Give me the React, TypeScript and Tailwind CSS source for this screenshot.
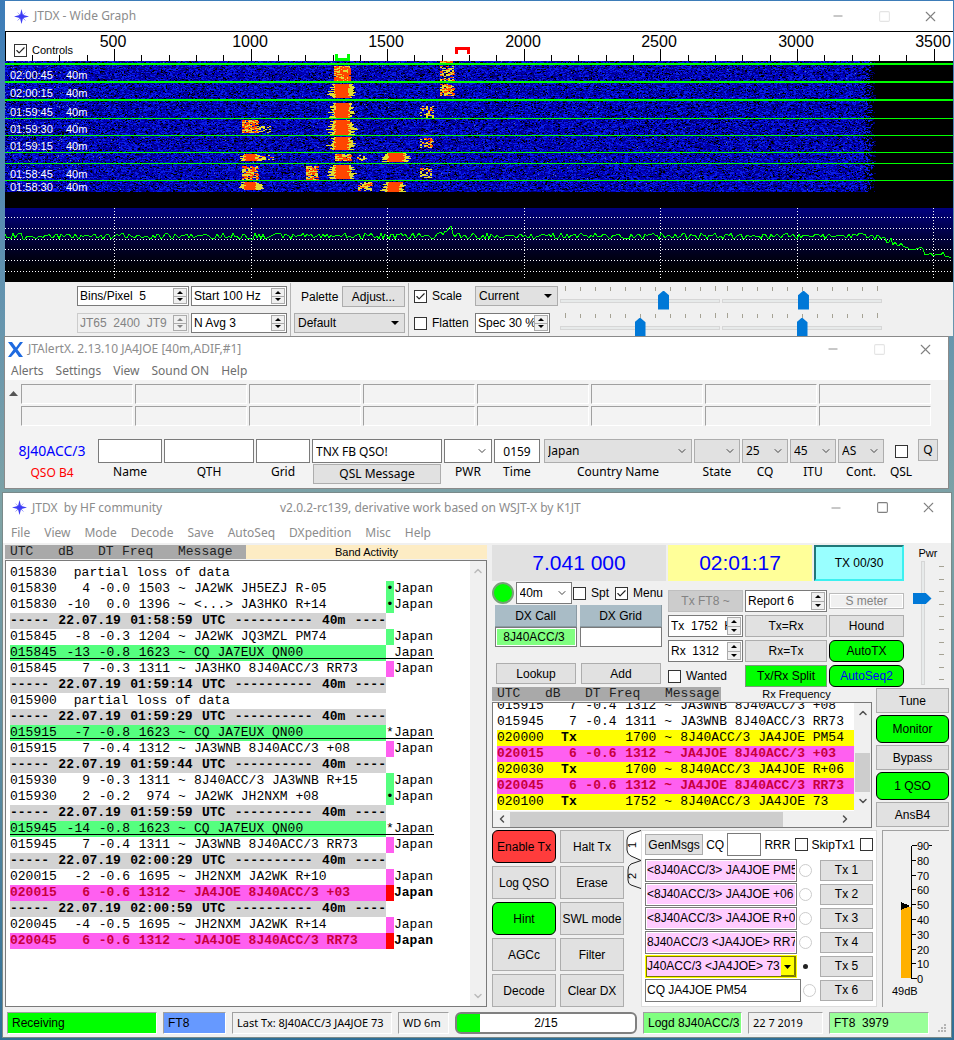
import { useMemo, type ReactNode } from "react"
import { Check, ChevronDown, ChevronLeft, ChevronRight, ChevronUp, Minus, Square, X } from "lucide-react"
import clsx from "clsx"

/* ---------- data ---------- */

type Decode = {
  utc?: string
  db?: string
  dt?: string
  freq?: string
  msg?: string
  note?: string
  divider?: string
  tone?: "cq" | "mine" | "tx"
  mark?: "green" | "pink" | "red" | "none"
  sign?: string
}

const bandActivity: Decode[] = [
  { utc: "015830", note: "partial loss of data" },
  { utc: "015830", db: "4", dt: "-0.0", freq: "1503", msg: "JA2WK JH5EZJ R-05", mark: "green", sign: "•" },
  { utc: "015830", db: "-10", dt: "0.0", freq: "1396", msg: "<...> JA3HKO R+14", mark: "green", sign: "•" },
  { divider: "01:58:59" },
  { utc: "015845", db: "-8", dt: "-0.3", freq: "1204", msg: "JA2WK JQ3MZL PM74", mark: "green" },
  { utc: "015845", db: "-13", dt: "-0.8", freq: "1623", msg: "CQ JA7EUX QN00", tone: "cq", mark: "none" },
  { utc: "015845", db: "7", dt: "-0.3", freq: "1311", msg: "JA3HKO 8J40ACC/3 RR73", mark: "pink" },
  { divider: "01:59:14" },
  { utc: "015900", note: "partial loss of data" },
  { divider: "01:59:29" },
  { utc: "015915", db: "-7", dt: "-0.8", freq: "1623", msg: "CQ JA7EUX QN00", tone: "cq", mark: "none", sign: "*" },
  { utc: "015915", db: "7", dt: "-0.4", freq: "1312", msg: "JA3WNB 8J40ACC/3 +08", mark: "pink" },
  { divider: "01:59:44" },
  { utc: "015930", db: "9", dt: "-0.3", freq: "1311", msg: "8J40ACC/3 JA3WNB R+15", mark: "green" },
  { utc: "015930", db: "2", dt: "-0.2", freq: "974", msg: "JA2WK JH2NXM +08", mark: "green", sign: "•" },
  { divider: "01:59:59" },
  { utc: "015945", db: "-14", dt: "-0.8", freq: "1623", msg: "CQ JA7EUX QN00", tone: "cq", mark: "none", sign: "*" },
  { utc: "015945", db: "7", dt: "-0.4", freq: "1311", msg: "JA3WNB 8J40ACC/3 RR73", mark: "pink" },
  { divider: "02:00:29" },
  { utc: "020015", db: "-2", dt: "-0.6", freq: "1695", msg: "JH2NXM JA2WK R+10", mark: "pink" },
  { utc: "020015", db: "6", dt: "-0.6", freq: "1312", msg: "JA4JOE 8J40ACC/3 +03", tone: "mine", mark: "red" },
  { divider: "02:00:59" },
  { utc: "020045", db: "-4", dt: "-0.5", freq: "1695", msg: "JH2NXM JA2WK R+14", mark: "pink" },
  { utc: "020045", db: "6", dt: "-0.6", freq: "1312", msg: "JA4JOE 8J40ACC/3 RR73", tone: "mine", mark: "red" },
]

const rxFrequency: Decode[] = [
  { utc: "015915", db: "7", dt: "-0.4", freq: "1312", msg: "JA3WNB 8J40ACC/3 +08" },
  { utc: "015945", db: "7", dt: "-0.4", freq: "1311", msg: "JA3WNB 8J40ACC/3 RR73" },
  { utc: "020000", db: "Tx", dt: "", freq: "1700", msg: "8J40ACC/3 JA4JOE PM54", tone: "tx" },
  { utc: "020015", db: "6", dt: "-0.6", freq: "1312", msg: "JA4JOE 8J40ACC/3 +03", tone: "mine" },
  { utc: "020030", db: "Tx", dt: "", freq: "1700", msg: "8J40ACC/3 JA4JOE R+06", tone: "tx" },
  { utc: "020045", db: "6", dt: "-0.6", freq: "1312", msg: "JA4JOE 8J40ACC/3 RR73", tone: "mine" },
  { utc: "020100", db: "Tx", dt: "", freq: "1752", msg: "8J40ACC/3 JA4JOE 73", tone: "tx" },
]

// x, y, width, height, heat (0 = faint yellow, 1 = solid orange)
const signals = [
  [435, 0, 12, 2, 0.5],
  [329, 5, 16, 15, 0.6], [435, 5, 14, 15, 0.15],
  [329, 23, 16, 14, 0.9], [435, 23, 14, 12, 0.25],
  [329, 42, 16, 15, 0.9], [415, 45, 13, 12, 0.03],
  [329, 59, 16, 15, 1], [237, 59, 15, 13, 0.45], [252, 65, 14, 7, 0.01],
  [329, 76, 16, 13, 1], [415, 77, 14, 10, 0.08],
  [239, 93, 13, 7, 0.9], [330, 93, 15, 7, 0.4], [253, 94, 15, 6, 0.02], [352, 94, 10, 6, 0.04], [382, 92, 18, 9, 1],
  [237, 105, 15, 14, 0.35], [301, 105, 12, 14, 0.35], [329, 104, 16, 14, 0.9], [415, 107, 12, 10, 0.04],
  [239, 121, 13, 8, 0.9], [353, 121, 13, 9, 0.15], [382, 121, 15, 10, 1],
]

const stamps = [
  ["02:00:45", 18], ["02:00:15", 36], ["01:59:45", 55], ["01:59:30", 72],
  ["01:59:15", 89], ["01:58:45", 117], ["01:58:30", 130],
] as const

const greenLines = [[2, 2], [20, 2], [38, 2], [57, 1], [74, 1], [91, 1], [102, 1], [119, 1]]

// small deterministic generator so the waterfall is stable between renders
function seeded(seed: number) {
  let s = seed
  return () => {
    s = (s * 1664525 + 1013904223) % 4294967296
    return s / 4294967296
  }
}

/* ---------- wide graph drawings ---------- */

function Waterfall() {
  const layers = useMemo(() => {
    const rnd = seeded(41)
    let dark = ""
    let navy = ""
    let bright = ""
    let specks = ""
    let yellow = ""
    let orange = ""
    for (let y = 0; y < 131; y++) {
      let x = 0
      while (x < 870) {
        const w = rnd() < 0.6 ? 1 : 2
        const r = rnd()
        const edge = x > 856 ? (x - 856) / 18 : 0
        if (r < 0.09 + edge) dark += `M${x} ${y}h${w}`
        else if (r < 0.33 + edge) navy += `M${x} ${y}h${w}`
        else if (r > 0.72) bright += `M${x} ${y}h${w}`
        if (rnd() < (x < 75 ? 0.03 : 0.002)) specks += `M${x} ${y}h1`
        x += w
      }
    }
    for (const [sx, sy, sw, sh, heat] of signals) {
      for (let y = sy; y < sy + sh; y++) {
        if (heat > 0.85) {
          // rows bulge toward the middle of each burst
          const mid = 1 - Math.abs((y - sy) / sh - 0.6)
          const left = Math.floor(rnd() * 9 * mid)
          const right = Math.floor(rnd() * 9 * mid)
          yellow += `M${sx - left} ${y}h${sw + left + right}`
          orange += `M${sx + Math.floor(rnd() * 3)} ${y}h${sw - 1 - Math.floor(rnd() * 3)}`
          continue
        }
        for (let x = sx; x < sx + sw; x += 2) {
          if (rnd() < 0.35 + heat) yellow += `M${x} ${y}h2`
          if (rnd() < heat) orange += `M${x} ${y}h3`
        }
      }
    }
    return { dark, navy, bright, specks, yellow, orange }
  }, [])

  return (
    <svg className="block h-[131px] w-full bg-black" shapeRendering="crispEdges">
      <rect width="870" height="131" fill="#0000b9" />
      <g transform="translate(0 .5)" fill="none">
        <path d={layers.navy} stroke="#000078" />
        <path d={layers.bright} stroke="#0a1ee6" />
        <path d={layers.dark} stroke="#000" />
        <path d={layers.specks} stroke="#5a78b4" />
        <path d={layers.yellow} stroke="#e1dc32" />
        <path d={layers.orange} stroke="#ff4600" />
      </g>
      {greenLines.map(([y, h]) => (
        <rect key={y} y={y} width="100%" height={h} fill="#00ff00" />
      ))}
      <g fill="#fff" fontSize="11">
        {stamps.map(([time, y]) => (
          <g key={time}>
            <text x="5" y={y}>{time}</text>
            <text x="61" y={y}>40m</text>
          </g>
        ))}
      </g>
    </svg>
  )
}

function FrequencyScale() {
  const ticks = Array.from({ length: 34 }, (_, i) => ({ x: 27 + Math.round(i * 27.32), hz: 200 + i * 100 }))
  return (
    <svg className="block h-[30px] w-full border-t border-l border-black bg-white" shapeRendering="crispEdges">
      {ticks.map(({ x, hz }) => (
        <rect key={hz} x={x - 1} y={hz % 500 === 0 ? 17 : 23} width="1" height="13" fill="#000" />
      ))}
      <g fontSize="16" textAnchor="middle">
        {ticks.filter((t) => t.hz % 500 === 0).map(({ x, hz }) => (
          <text key={hz} x={x - 2} y="15">{hz}</text>
        ))}
      </g>
      <path d="M330.5 22v5.5h12V22" fill="none" stroke="#00ff00" strokeWidth="3" />
      <path d="M450.5 22v-5.5h12V22" fill="none" stroke="#ff0000" strokeWidth="3" />
    </svg>
  )
}

function Spectrum() {
  const line = useMemo(() => {
    const rnd = seeded(7)
    const pts: string[] = []
    for (let x = 0; x < 948; x += 2) {
      let y = 28 + Math.round((rnd() - 0.5) * 6)
      if (x > 434 && x < 447) y -= Math.round((x - 434) * 0.9)
      if (x > 868) y += Math.round((Math.min(x, 935) - 868) * 0.3)
      if (x > 936) y -= 2
      pts.push(`${x},${y}`)
    }
    return pts.join(" ")
  }, [])

  return (
    <svg className="block h-[74px] w-full bg-linear-to-b from-[#00007f] to-black" shapeRendering="crispEdges">
      <g stroke="#fff" strokeDasharray="1 2">
        {[9, 20, 31, 41, 52, 63].map((y) => (
          <line key={y} x1="0" x2="100%" y1={y + 0.5} y2={y + 0.5} />
        ))}
        {[109, 246, 382, 519, 655, 792, 928].map((x) => (
          <line key={x} x1={x + 0.5} x2={x + 0.5} y1="0" y2="72" />
        ))}
      </g>
      <polyline points={line} fill="none" stroke="#00ff00" />
    </svg>
  )
}

/* ---------- widgets ---------- */

function Btn({ children, className }: { children: ReactNode; className?: string }) {
  return (
    <button className={clsx("border whitespace-pre", className ?? "border-[#adadad] bg-[#e1e1e1] text-black")}>
      {children}
    </button>
  )
}

function Tick({ label, checked, className, after }: { label: string; checked?: boolean; className?: string; after?: boolean }) {
  return (
    <label className={clsx("flex items-center gap-[5px]", after && "flex-row-reverse", className)}>
      <span className="relative block size-[13px]">
        <input
          type="checkbox"
          aria-label={label || "QSL"}
          defaultChecked={checked}
          className="block size-[13px] appearance-none border border-[#333] bg-white"
        />
        {checked && <Check className="pointer-events-none absolute top-px left-px size-[11px] text-[#222]" strokeWidth={2.5} />}
      </span>
      {label}
    </label>
  )
}

function Spin({ label, value, className, disabled }: { label: string; value: string; className?: string; disabled?: boolean }) {
  return (
    <div
      className={clsx(
        "flex border p-px",
        disabled ? "border-[#ccc] bg-[#f0f0f0] text-[#838383]" : "border-[#7a7a7a] bg-white",
        className,
      )}
    >
      <input aria-label={label} defaultValue={value} disabled={disabled} className="min-w-0 flex-1 bg-transparent pl-px whitespace-pre outline-none" />
      <span className="flex w-[14px] flex-col">
        <button aria-label={`${label} up`} disabled={disabled} className="flex flex-1 items-center justify-center border border-[#ababab] bg-[#f0f0f0]">
          <svg width="6" height="3"><path d="M0 3L3 0L6 3z" fill="currentColor" /></svg>
        </button>
        <button aria-label={`${label} down`} disabled={disabled} className="flex flex-1 items-center justify-center border border-t-0 border-[#ababab] bg-[#f0f0f0]">
          <svg width="6" height="3"><path d="M0 0L3 3L6 0z" fill="currentColor" /></svg>
        </button>
      </span>
    </div>
  )
}

function Combo({ label, value, className, solid }: { label: string; value: string; className?: string; solid?: boolean }) {
  return (
    <span className={clsx("relative block border", className)}>
      <select aria-label={label} className="block size-full appearance-none bg-transparent pl-[3px] outline-none">
        <option>{value}</option>
      </select>
      {solid ? (
        <svg className="pointer-events-none absolute inset-y-0 right-[5px] my-auto" width="8" height="4">
          <path d="M0 0h8L4 4z" fill="#000" />
        </svg>
      ) : (
        <ChevronDown className="pointer-events-none absolute inset-y-0 right-[3px] my-auto size-3 text-[#444]" strokeWidth={2} />
      )}
    </span>
  )
}

function Slider({ label, value }: { label: string; value: number }) {
  return (
    <div className="w-[160px]">
      <svg className="block h-[5px] w-full" shapeRendering="crispEdges">
        {Array.from({ length: 11 }, (_, i) => (
          <rect key={i} x={5 + i * 15} width="1" height={i % 10 === 0 ? 5 : 4} y={i % 10 === 0 ? 0 : 1} fill="#a5a294" />
        ))}
      </svg>
      <input
        type="range"
        aria-label={label}
        defaultValue={value}
        className="block h-[19px] w-full appearance-none bg-transparent [&::-webkit-slider-runnable-track]:h-1 [&::-webkit-slider-runnable-track]:border [&::-webkit-slider-runnable-track]:border-[#d6d6d6] [&::-webkit-slider-runnable-track]:bg-[#e7eaea] [&::-webkit-slider-thumb]:-mt-[9px] [&::-webkit-slider-thumb]:h-[19px] [&::-webkit-slider-thumb]:w-[11px] [&::-webkit-slider-thumb]:appearance-none [&::-webkit-slider-thumb]:bg-[#0078d7] [&::-webkit-slider-thumb]:[clip-path:polygon(50%_0,100%_25%,100%_100%,0_100%,0_25%)]"
      />
    </div>
  )
}

function StarLogo() {
  return (
    <svg className="size-[15px]" viewBox="0 0 16 16">
      <path d="M3 3L6.500 6L8 0L9.500 6L13 3L10 6.500L16 8L10 9.500L13 13L9.500 10L8 16L6.500 10L3 13L6 9.500L0 8L6 6.500z" fill="#3c3cf5" />
    </svg>
  )
}

function WindowButtons({ faded, className }: { faded?: boolean; className?: string }) {
  return (
    <div className={clsx("flex w-[138px] items-center text-[#808080]", className)}>
      <button aria-label="Minimize" className="flex flex-1 justify-center"><Minus className="size-[14px]" strokeWidth={1.5} /></button>
      <button aria-label="Maximize" className={clsx("flex flex-1 justify-center", faded && "text-[#e4e4e4]")}><Square className="size-[13px]" strokeWidth={2} /></button>
      <button aria-label="Close" className="flex flex-1 justify-center"><X className="size-[17px]" strokeWidth={1.5} /></button>
    </div>
  )
}

function DecodeTable({ rows, country }: { rows: Decode[]; country?: boolean }) {
  // one unbroken rule under every cell of a CQ row
  const rule = "bg-[linear-gradient(#000,#000)] bg-[length:100%_1px] bg-[position:0_13px] bg-no-repeat"
  return (
    <table className="table-fixed border-collapse font-['Liberation_Mono',monospace] text-[13px] leading-4 whitespace-pre">
      <colgroup>
        <col className="w-[56px]" />
        <col className="w-[24px]" />
        <col className="w-[40px]" />
        <col className="w-[40px]" />
        <col className="w-[24px]" />
        <col className={country ? "w-[192px]" : "w-[174px]"} />
        {country && <col className="w-[8px]" />}
        {country && <col className="w-[40px]" />}
      </colgroup>
      <tbody>
        {rows.map((r, i) => {
          if (r.divider) {
            return (
              <tr key={i} className="h-4 font-bold">
                <td colSpan={6} className="bg-[#d3d3d3] p-0">
                  <div className="flex justify-between">
                    {["-----", "22.07.19", r.divider, "UTC", "----------", "40m", "----"].map((part, n) => (
                      <span key={n}>{part}</span>
                    ))}
                  </div>
                </td>
              </tr>
            )
          }
          if (r.note) {
            return (
              <tr key={i} className="h-4">
                <td className="p-0">{r.utc}</td>
                <td colSpan={5} className="p-0">{" " + r.note}</td>
              </tr>
            )
          }
          const cell = clsx(
            "p-0",
            r.tone === "cq" && ["bg-[#55ff7f]", rule],
            r.tone === "mine" && "bg-[#ff5ff0] font-bold text-[#c8003c]",
            r.tone === "tx" && "bg-[#ffff00]",
          )
          return (
            <tr key={i} className="h-4">
              <td className={cell}>{r.utc}</td>
              <td className={clsx(cell, "text-right", r.tone === "tx" && "font-bold")}>{r.db}</td>
              <td className={clsx(cell, "text-right")}>{r.dt}</td>
              <td className={clsx(cell, "text-right")}>{r.freq}</td>
              <td className={clsx(cell, "text-center")}>~</td>
              <td className={cell}>{r.msg}</td>
              {country && (
                <td
                  className={clsx(
                    "p-0",
                    r.mark === "green" && "bg-[#55ff7f]",
                    r.mark === "pink" && "bg-[#ff5ff0]",
                    r.mark === "red" && "bg-[#ff0000]",
                    r.tone === "cq" && rule,
                  )}
                >
                  {r.sign}
                </td>
              )}
              {country && <td className={clsx("p-0", r.tone === "cq" && rule, r.tone === "mine" && "font-bold")}>Japan</td>}
            </tr>
          )
        })}
      </tbody>
    </table>
  )
}

/* ---------- windows ---------- */

function WideGraph() {
  return (
    <section className="mr-px ml-[5px] bg-[#f0f0f0]">
      <header className="flex h-[30px] items-center justify-between bg-white pl-[9px] font-['Noto_Sans',sans-serif] text-[#8c8c8c]">
        <span className="flex items-center gap-[5px]"><StarLogo />JTDX - Wide Graph</span>
        <WindowButtons faded />
      </header>
      <div className="relative">
        <FrequencyScale />
        <Tick label="Controls" checked className="absolute top-[11px] left-[9px] text-[11px]" />
      </div>
      <Waterfall />
      <div className="h-[16px] bg-black" />
      <Spectrum />
      <div className="flex gap-x-[2px] pt-1 pl-[72px]">
        <div className="grid grid-cols-[112px_96px] grid-rows-[20px_20px] gap-x-[2px] gap-y-[7px]">
          <Spin label="Bins per pixel" value="Bins/Pixel  5" />
          <Spin label="Start frequency" value="Start 100 Hz" />
          <Spin label="Split frequency" value="JT65  2400  JT9" disabled />
          <Spin label="Averages" value="N Avg 3" />
        </div>
        <div className="-mt-[3px] ml-px flex w-[119px] flex-col gap-[6px] border-x border-[#b4b4b4] px-[3px] pt-[3px]">
          <div className="flex items-center justify-between pl-[7px]">
            Palette
            <Btn className="h-[21px] w-[63px] border-[#adadad] bg-[#e1e1e1]">Adjust...</Btn>
          </div>
          <Combo label="Palette" value="Default" solid className="h-5 border-[#adadad] bg-[#e1e1e1]" />
        </div>
        <div className="grid grid-cols-[59px_auto_auto_auto] grid-rows-[24px_23px] gap-x-[2px] gap-y-[3px] pl-[3px]">
          <Tick label="Scale" checked className="h-5" />
          <Combo label="Spectrum" value="Current" solid className="h-5 w-[83px] border-[#adadad] bg-[#e1e1e1]" />
          <Slider label="Waterfall gain" value={66} />
          <Slider label="Waterfall zero" value={51} />
          <Tick label="Flatten" className="h-5" />
          <Spin label="Spectrum share" value="Spec 30 %" className="h-5 w-[75px]" />
          <Slider label="Spectrum gain" value={50} />
          <Slider label="Spectrum zero" value={50} />
        </div>
      </div>
    </section>
  )
}

function Field({ label, children, className }: { label: string; children: ReactNode; className?: string }) {
  return (
    <div className={clsx("flex flex-col text-center", className)}>
      {children}
      <span className="leading-[18px]">{label}</span>
    </div>
  )
}

function AlertWindow() {
  const box = "block h-6 w-full border border-[#7a7a7a] bg-white px-[3px] outline-none"
  const grey = "h-6 w-full border-[#adadad] bg-[#e1e1e1] text-left"
  return (
    <section className="relative mr-[5px] ml-1 border border-[#8a8a8a] bg-[#f3f3f3] font-['Noto_Sans',sans-serif]">
      <header className="flex h-6 items-center justify-between bg-white pl-[3px] text-[#8c8c8c]">
        <span className="flex items-center gap-[5px]">
          <svg className="size-[15px]" viewBox="0 0 15 15">
            <path d="M0 0H4L8 5.500L12 0H15L9.500 7.500L15 15H11L7.500 10L3 15H0L5.500 7.500z" fill="#1e6ae0" />
          </svg>
          JTAlertX. 2.13.10 JA4JOE [40m,ADIF,#1]
        </span>
        <WindowButtons faded />
      </header>
      <nav className="flex h-[19px] items-center gap-3 bg-white pl-[6px] text-[#6e6e6e]">
        {["Alerts", "Settings", "View", "Sound ON", "Help"].map((m) => (
          <button key={m}>{m}</button>
        ))}
      </nav>
      <div className="flex pt-1 pr-[17px] pl-1">
        <svg className="mt-[7px] mr-[3px] shrink-0" width="9" height="5"><path d="M0 5L4.500 0L9 5z" fill="#555" /></svg>
        <div className="grid flex-1 grid-cols-8 gap-x-[2px] gap-y-[2px]">
          {Array.from({ length: 16 }, (_, i) => (
            <div key={i} className="h-5 border border-t-[#a0a0a0] border-r-white border-b-white border-l-[#a0a0a0]" />
          ))}
        </div>
      </div>
      <div className="flex gap-[2px] pt-[13px] pr-[10px] pb-1 pl-[3px]">
        <div className="flex w-[88px] flex-col items-center">
          <span className="text-[14px] leading-6 text-[#0000ff]">8J40ACC/3</span>
          <span className="leading-5 text-[#ff0000]">QSO B4</span>
        </div>
        <Field label="Name" className="w-[64px]"><input aria-label="Name" className={box} /></Field>
        <Field label="QTH" className="w-[90px]"><input aria-label="QTH" className={box} /></Field>
        <Field label="Grid" className="w-[54px]"><input aria-label="Grid" className={box} /></Field>
        <div className="w-[130px]">
          <input aria-label="QSL message" defaultValue="TNX FB QSO!" className={box} />
          <Btn className="mx-px mt-px block h-5 w-[128px] border-[#adadad] bg-[#e1e1e1]">QSL Message</Btn>
        </div>
        <Field label="PWR" className="w-[48px]"><Combo label="PWR" value="" className="h-6 border-[#7a7a7a] bg-white" /></Field>
        <Field label="Time" className="w-[46px]"><input aria-label="Time" defaultValue="0159" className={clsx(box, "text-center")} /></Field>
        <Field label="Country Name" className="ml-[2px] flex-1"><Combo label="Country Name" value="Japan" className={grey} /></Field>
        <Field label="State" className="w-[46px]"><Combo label="State" value="" className={grey} /></Field>
        <Field label="CQ" className="w-[46px]"><Combo label="CQ" value="25" className={grey} /></Field>
        <Field label="ITU" className="w-[46px]"><Combo label="ITU" value="45" className={grey} /></Field>
        <Field label="Cont." className="w-[46px]"><Combo label="Continent" value="AS" className={grey} /></Field>
        <Field label="QSL" className="w-[30px]"><Tick label="" className="h-6 justify-center" /></Field>
        <Btn className="h-[22px] w-5 border-[#adadad] bg-[#e1e1e1]">Q</Btn>
      </div>
    </section>
  )
}

function ListHeader({ title, className }: { title: string; className?: string }) {
  return (
    <div className="flex h-[14px] items-center leading-[14px]">
      <span className={clsx("flex h-full bg-[#a9a9a9] pl-[5px] font-['Liberation_Mono',monospace] text-[13px] text-[#222]", className)}>
        <span className="w-[48px]">UTC</span>
        <span className="w-[40px]">dB</span>
        <span className="w-[24px]">DT</span>
        <span className="w-[56px]">Freq</span>
        <span>Message</span>
      </span>
      <span className={clsx("flex-1 text-center text-[11px]", title === "Band Activity" && "bg-[#fdecc4]")}>{title}</span>
    </div>
  )
}

const go = "rounded-md border-black bg-[#00ff00] text-black"

function RadioPanel() {
  return (
    <div className="flex justify-between">
      <div>
        <div className="flex h-9 gap-[2px] text-[#0000ff]">
          <output className="flex w-[174px] items-center justify-center bg-[#e1e1e1] text-[21px]">7.041 000</output>
          <output className="flex w-[144px] items-center justify-center bg-[#ffff99] text-[21px]">02:01:17</output>
          <Btn className="w-[90px] border-2 border-t-[#207878] border-r-[#3cf0f0] border-b-[#3cf0f0] border-l-[#207878] bg-[#99ffff] text-black">TX 00/30</Btn>
        </div>
        <div className="mt-px flex gap-[5px]">
          <div className="w-[171px]">
            <div className="flex h-[22px] items-center">
              <span className="size-[22px] rounded-full border-2 border-[#78a078] bg-[#00ff00]" />
              <Combo label="Band" value="40m" className="ml-[2px] h-[22px] w-[58px] border-[#7a7a7a] bg-white" />
              <Tick label="Spt" className="ml-px" />
              <Tick label="Menu" checked className="ml-[6px]" />
            </div>
            <div className="mt-px grid grid-cols-[82px_82px] gap-x-[3px] pl-[3px]">
              <button className="h-[22px] border-r border-b border-[#8a9aa3] bg-[#a9bcc6]">DX Call</button>
              <button className="h-[22px] border-r border-b border-[#8a9aa3] bg-[#a9bcc6]">DX Grid</button>
              <input aria-label="DX Call" defaultValue="8J40ACC/3" className="h-5 border border-[#7a7a7a] bg-[#80ff80] pr-1 text-center shadow-[inset_0_0_0_1px_white] outline-none" />
              <input aria-label="DX Grid" className="h-5 border border-[#7a7a7a] bg-white px-1 outline-none" />
              <Btn className="mt-4 mr-px ml-px h-[21px] border-[#adadad] bg-[#e1e1e1]">Lookup</Btn>
              <Btn className="mt-4 mr-px ml-px h-[21px] border-[#adadad] bg-[#e1e1e1]">Add</Btn>
            </div>
          </div>
          <div className="mt-2 grid auto-rows-[22px] grid-cols-[75px_82px_75px] gap-x-[2px] gap-y-[3px]">
            <Btn className="border-[#bfbfbf] bg-[#cccccc] text-[#838383]">Tx FT8 ~</Btn>
            <Spin label="Report" value="Report 6" />
            <span className="my-[3px] flex items-center justify-center border border-[#bbb] whitespace-pre text-[#838383] shadow-[inset_0_0_0_1px_white]">S meter</span>
            <Spin label="Tx frequency" value="Tx  1752  Hz" />
            <Btn>Tx=Rx</Btn>
            <Btn>Hound</Btn>
            <Spin label="Rx frequency" value="Rx  1312" />
            <Btn>Rx=Tx</Btn>
            <Btn className={go}>AutoTX</Btn>
            <Tick label="Wanted" />
            <Btn className="border-[#7a9a7a] bg-[#00ff00]">Tx/Rx Split</Btn>
            <Btn className="rounded-md border-black bg-[#00ff00] text-[#0000ff]">AutoSeq2</Btn>
          </div>
        </div>
      </div>
      <label className="flex w-[42px] flex-col items-center text-[11px]">
        Pwr
        <span className="flex items-center">
          <input
            type="range"
            defaultValue={72}
            className="h-[124px] w-[20px] appearance-none bg-transparent [direction:rtl] [writing-mode:vertical-lr] [&::-webkit-slider-runnable-track]:w-1 [&::-webkit-slider-runnable-track]:border [&::-webkit-slider-runnable-track]:border-[#d6d6d6] [&::-webkit-slider-runnable-track]:bg-[#e7eaea] [&::-webkit-slider-thumb]:-ml-[9px] [&::-webkit-slider-thumb]:h-[11px] [&::-webkit-slider-thumb]:w-[19px] [&::-webkit-slider-thumb]:appearance-none [&::-webkit-slider-thumb]:bg-[#0078d7] [&::-webkit-slider-thumb]:[clip-path:polygon(0_0,70%_0,100%_50%,70%_100%,0_100%)]"
          />
          <svg className="ml-[6px]" width="5" height="124" shapeRendering="crispEdges">
            {Array.from({ length: 10 }, (_, i) => (
              <rect key={i} y={5 + Math.round(i * 12.6)} width="5" height="1" fill="#a5a294" />
            ))}
          </svg>
        </span>
      </label>
    </div>
  )
}

function SignalMeter() {
  return (
    <div className="ml-[5px] w-[67px] border-t border-l border-[#a0a0a0]">
      <svg className="block h-[172px] w-full" shapeRendering="crispEdges" fontSize="11">
        <rect x="18" y="76" width="10" height="71" fill="#ffb000" />
        <path d="M18 71l9 4l-9 4z" fill="#000" />
        <path d="M28.5 14.5V147.5M28.5 14.5h5M28.5 147.5h5" stroke="#000" />
        {[90, 80, 70, 60, 50, 40, 30, 20, 10, 0].map((v, i) => (
          <g key={v}>
            <rect x="29" y={14 + Math.round(i * 14.8)} width="4" height="1" fill="#000" />
            <text x="34" y={19 + Math.round(i * 14.8)}>{v}</text>
          </g>
        ))}
        <rect x="46" y="14" width="3" height="1" fill="#000" />
        <text x="9" y="164">49dB</text>
      </svg>
    </div>
  )
}

const messages = ["<8J40ACC/3> JA4JOE PM54", "<8J40ACC/3> JA4JOE +06", "<8J40ACC/3> JA4JOE R+06", "8J40ACC/3 <JA4JOE> RR73"]

function TxRow({ n, children, checked }: { n: number; children: ReactNode; checked?: boolean }) {
  return (
    <div className="flex h-6 items-center justify-between">
      {children}
      <input
        type="radio"
        name="next"
        aria-label={`Send Tx ${n} next`}
        defaultChecked={checked}
        className="mr-auto ml-[2px] size-[13px] appearance-none rounded-full border border-[#ccc] bg-white checked:border-4 checked:border-white checked:bg-[#222]"
      />
      <Btn className="h-[21px] w-[53px] border-[#adadad] bg-[#e1e1e1]">Tx {n}</Btn>
    </div>
  )
}

function TxPanel() {
  return (
    <div className="mt-[2px] flex">
      <div className="grid auto-rows-[33px] grid-cols-[64px_64px] gap-x-1 gap-y-[3px]">
        <Btn className="rounded-md border-black bg-[#ff3c3c]">Enable Tx</Btn>
        <Btn>Halt Tx</Btn>
        <Btn>Log QSO</Btn>
        <Btn>Erase</Btn>
        <Btn className={go}>Hint</Btn>
        <Btn>SWL mode</Btn>
        <Btn>AGCc</Btn>
        <Btn>Filter</Btn>
        <Btn>Decode</Btn>
        <Btn>Clear DX</Btn>
      </div>
      <svg className="ml-[2px] h-[62px] w-[15px] shrink-0" fontSize="11">
        <path d="M15 .5L5 4Q1 6 1 10V20Q1 24 5 26L15 30V.5z" fill="#fff" />
        <path d="M15 .5L5 4Q1 6 1 10V20Q1 24 5 26L15 30.500L5 34Q2 36 2 40V50Q2 54 5 55L15 58.500" fill="none" stroke="#222" />
        <text transform="translate(10 18) rotate(-90)">1</text>
        <text transform="translate(10 49) rotate(-90)">2</text>
      </svg>
      <div className="min-w-0 flex-1 border border-[#dcdcdc] bg-white px-[3px]">
        <div className="flex h-[27px] items-center justify-between">
          <Btn className="h-[21px] w-[58px] border-[#adadad] bg-[#e1e1e1]">GenMsgs</Btn>
          <label className="flex items-center gap-[3px]">CQ<input className="h-[23px] w-[34px] border border-[#7a7a7a] outline-none" /></label>
          <Tick label="RRR" after />
          <Tick label="SkipTx1" after />
        </div>
        {messages.map((m, i) => (
          <TxRow key={m} n={i + 1}>
            <input aria-label={`Tx ${i + 1} message`} defaultValue={m} className="h-[23px] w-[152px] border border-[#7a7a7a] bg-[#ffccff] px-px shadow-[inset_0_0_0_1px_white] outline-none" />
          </TxRow>
        ))}
        <TxRow n={5} checked>
          <span className="relative block h-[23px] w-[152px] border-2 border-[#ffff00] bg-[#ffccff] outline -outline-offset-2 outline-[#7a7a00]">
            <select aria-label="Tx 5 message" className="block size-full appearance-none outline-none">
              <option>J40ACC/3 &lt;JA4JOE&gt; 73</option>
            </select>
            <svg className="pointer-events-none absolute top-0 right-0 h-full w-[14px] bg-[#ffff00]">
              <path d="M3 8h7l-3.500 4z" fill="#000" />
              <path d="M0 18.5H13.500V0" fill="none" stroke="#7a7a00" />
            </svg>
          </span>
        </TxRow>
        <TxRow n={6}>
          <input aria-label="Tx 6 message" defaultValue="CQ JA4JOE PM54" className="h-[23px] w-[156px] border border-[#7a7a7a] bg-white px-px outline-none" />
        </TxRow>
      </div>
      <SignalMeter />
    </div>
  )
}

function StatusBar() {
  const sunk = "flex items-center border border-t-[#a0a0a0] border-r-white border-b-white border-l-[#a0a0a0] px-1"
  return (
    <footer className="flex h-[30px] gap-[6px] pt-[5px] pb-[3px] pl-1 whitespace-pre">
      <span className={clsx(sunk, "flex-1 bg-[#00ff00]")}>Receiving</span>
      <span className={clsx(sunk, "w-[63px] bg-[#6699ff]")}>FT8</span>
      <span className={clsx(sunk, "w-[160px] font-['Noto_Sans',sans-serif] text-[11px]")}>Last Tx: 8J40ACC/3 JA4JOE 73</span>
      <span className={clsx(sunk, "w-[51px] font-['Noto_Sans',sans-serif] text-[11px]")}>WD 6m</span>
      <span
        role="progressbar"
        aria-valuenow={2}
        aria-valuemax={15}
        className="flex w-[182px] items-center justify-center rounded-md border-2 border-[#808080] bg-linear-to-r from-[#00ff00] from-13% to-white to-13%"
      >
        2/15
      </span>
      <span className={clsx(sunk, "w-[99px] bg-[#80ff80]")}>Logd 8J40ACC/3</span>
      <span className={clsx(sunk, "w-[75px] font-['Noto_Sans',sans-serif] text-[11px]")}>22 7 2019</span>
      <span className={clsx(sunk, "mr-[2px] w-[100px] bg-[#99ff99]")}>FT8  3979</span>
      <svg className="mr-1 self-end" width="10" height="10" fill="#b4b4b4">
        <path d="M7 0h2v2H7zM7 3h2v2H7zM4 3h2v2H4zM7 6h2v2H7zM4 6h2v2H4zM1 6h2v2H1z" />
      </svg>
    </footer>
  )
}

function MainWindow() {
  return (
    <section className="mt-[3px] mr-[2px] mb-[2px] ml-[2px] flex flex-1 flex-col border border-[#7a8a8a] bg-[#f0f0f0]">
      <header className="grid h-[29px] grid-cols-[268px_1fr_auto] items-center bg-white pl-[9px] font-['Noto_Sans',sans-serif] text-[#8c8c8c]">
        <span className="flex items-center gap-[5px] whitespace-pre"><StarLogo />JTDX  by HF community</span>
        <span>v2.0.2-rc139, derivative work based on WSJT-X by K1JT</span>
        <WindowButtons />
      </header>
      <nav className="mb-[2px] flex h-[21px] items-center gap-[14px] bg-white pl-2 font-['Noto_Sans',sans-serif] text-[#8c8c8c]">
        {["File", "View", "Mode", "Decode", "Save", "AutoSeq", "DXpedition", "Misc", "Help"].map((m) => (
          <button key={m}>{m}</button>
        ))}
      </nav>
      <main className="flex flex-1 gap-[5px] pr-[2px] pl-[2px]">
        <div className="flex flex-1 flex-col">
          <ListHeader title="Band Activity" className="w-[241px]" />
          <div className="mt-px flex flex-1 justify-between border border-[#7a7a7a] bg-white">
            <div className="pt-1 pl-1"><DecodeTable rows={bandActivity} country /></div>
            <div className="flex w-[16px] flex-col items-center justify-between bg-[#f0f0f0] py-1 text-[#bbb]">
              <ChevronUp className="size-3" strokeWidth={3} />
              <ChevronDown className="size-3" strokeWidth={3} />
            </div>
          </div>
        </div>
        <div className="w-[457px]">
          <RadioPanel />
          <div className="flex gap-1">
            <div className="w-[380px]">
              <ListHeader title="Rx Frequency" className="w-[229px]" />
              <div className="mt-px border border-[#7a7a7a] bg-white">
                <div className="flex h-[108px]">
                  <div className="flex flex-1 items-end pb-px pl-1">
                    <div className="flex h-full flex-col justify-end overflow-hidden"><DecodeTable rows={rxFrequency} /></div>
                  </div>
                  <div className="flex w-[17px] flex-col items-center bg-[#f0f0f0] pt-1 pb-1 text-[#505050]">
                    <ChevronUp className="size-3" strokeWidth={3} />
                    <div className="mt-auto mb-[3px] h-[39px] w-[15px] bg-[#cdcdcd]" />
                    <ChevronDown className="size-3" strokeWidth={3} />
                  </div>
                </div>
                <div className="flex h-[16px] items-center bg-[#f0f0f0] pr-[20px] pl-[3px] text-[#505050]">
                  <ChevronLeft className="size-3" strokeWidth={3} />
                  <div className="mr-auto ml-[2px] h-[15px] w-[273px] bg-[#cdcdcd]" />
                  <ChevronRight className="size-3" strokeWidth={3} />
                </div>
              </div>
            </div>
            <div className="flex flex-1 flex-col gap-[2px] pt-px">
              <Btn className="h-[25px] border-[#adadad] bg-[#e1e1e1]">Tune</Btn>
              <Btn className={clsx(go, "h-[28px]")}>Monitor</Btn>
              <Btn className="h-[25px] border-[#adadad] bg-[#e1e1e1]">Bypass</Btn>
              <Btn className={clsx(go, "h-[28px]")}>1 QSO</Btn>
              <Btn className="h-[25px] border-[#adadad] bg-[#e1e1e1]">AnsB4</Btn>
            </div>
          </div>
          <TxPanel />
        </div>
      </main>
      <StatusBar />
    </section>
  )
}

export default function App() {
  return (
    <div className="flex min-h-screen flex-col bg-linear-to-b from-[#3c7cb8] via-[#7fa3a5] to-[#2f6f96] pt-px font-['Liberation_Sans',sans-serif] text-[12px] leading-4 text-black">
      <WideGraph />
      <AlertWindow />
      <MainWindow />
    </div>
  )
}
